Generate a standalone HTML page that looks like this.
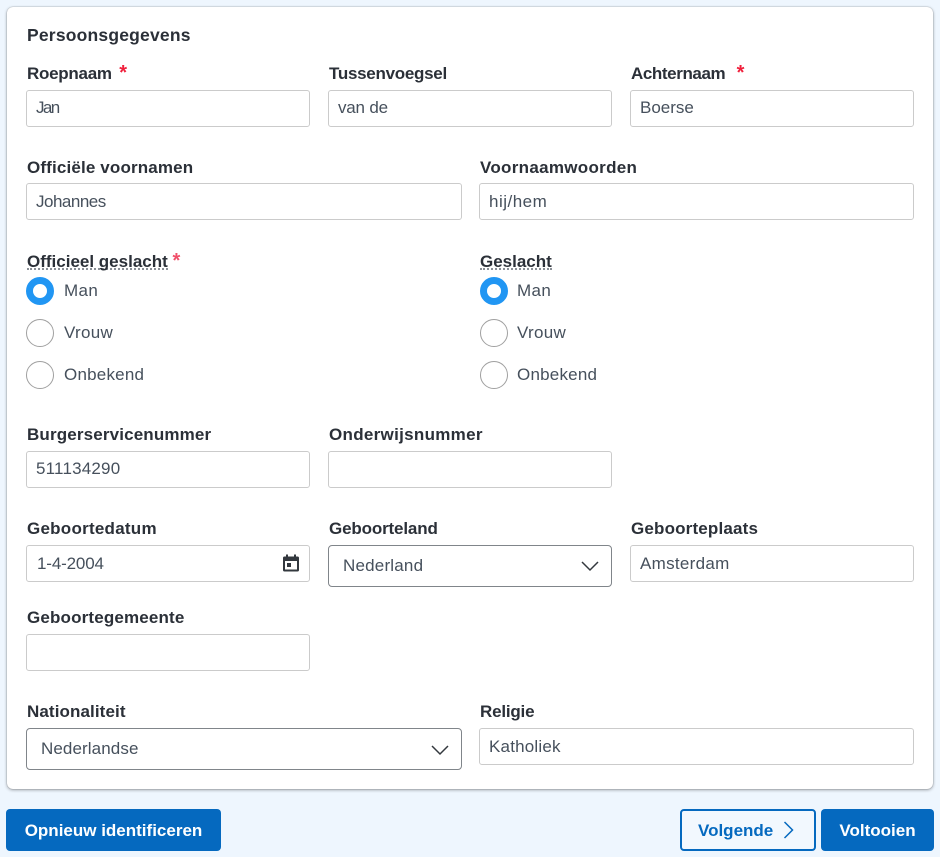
<!DOCTYPE html>
<html lang="nl">
<head>
<meta charset="utf-8">
<title>Persoonsgegevens</title>
<style>
html,body{margin:0;padding:0;}
body{width:940px;height:857px;background:#eef6fe;position:relative;overflow:hidden;font-family:"Liberation Sans",sans-serif;color:#3f4a56;}
.card{position:absolute;left:7px;top:7px;width:926px;height:782px;background:#fff;border-radius:6px;box-shadow:0 1px 3px rgba(0,0,0,.35),0 0 1px rgba(0,0,0,.4);}
.t{position:absolute;white-space:nowrap;line-height:20px;}
.h{font-size:17.5px;font-weight:700;color:#2b3038;left:27px;top:25px;letter-spacing:.2px;}
.l{font-size:17px;font-weight:700;color:#2b3038;letter-spacing:.1px;margin-top:1px;}
.l i{font-style:normal;color:#f0203c;font-size:20px;line-height:0;}
.d{border-bottom:2px dotted #8a8f96;line-height:12px;display:inline-block;}
.v{font-size:17px;color:#46505c;letter-spacing:.1px;}
.f{position:absolute;box-sizing:border-box;height:37px;background:#fff;border:1px solid #cbcbcb;border-radius:3px;}
.s{position:absolute;box-sizing:border-box;height:42px;background:#fff;border:1px solid #80858a;border-radius:4px;}
.r{position:absolute;box-sizing:border-box;width:28px;height:28px;border-radius:50%;border:1.7px solid #a0a0a0;background:#fff;}
.r.on{border:7.5px solid #2196f3;}
.b{position:absolute;box-sizing:border-box;top:809px;height:42px;border-radius:4px;background:#0569bf;color:#fff;font-size:17px;font-weight:700;text-align:center;line-height:42px;}
svg{position:absolute;}
</style>
</head>
<body>
<div class="card"></div>
<div class="t h">Persoonsgegevens</div>

<div class="t l" style="left:27px;top:63px;letter-spacing:-.27px">Roepnaam <i style="margin-left:3px">*</i></div>
<div class="f" style="left:26px;top:90px;width:284px"></div>
<div class="t v" style="left:36px;top:98px;letter-spacing:-1.6px">Jan</div>
<div class="t l" style="left:329px;top:63px;letter-spacing:-.28px">Tussenvoegsel</div>
<div class="f" style="left:328px;top:90px;width:284px"></div>
<div class="t v" style="left:338px;top:98px;letter-spacing:-.2px">van de</div>
<div class="t l" style="left:631px;top:63px;letter-spacing:-.4px">Achternaam <i style="margin-left:7px">*</i></div>
<div class="f" style="left:630px;top:90px;width:284px"></div>
<div class="t v" style="left:640px;top:98px;letter-spacing:0">Boerse</div>

<div class="t l" style="left:27px;top:157px;letter-spacing:.15px">Officiële voornamen</div>
<div class="f" style="left:26px;top:183px;width:436px"></div>
<div class="t v" style="left:36px;top:192px;letter-spacing:-.5px">Johannes</div>
<div class="t l" style="left:480px;top:157px;letter-spacing:.3px">Voornaamwoorden</div>
<div class="f" style="left:479px;top:183px;width:435px"></div>
<div class="t v" style="left:489px;top:192px;letter-spacing:.5px">hij/hem</div>

<div class="t l" style="left:27px;top:251px;letter-spacing:0"><span class="d">Officieel geslacht</span> <i style="color:#f0506a">*</i></div>
<div class="r on" style="left:26px;top:277px"></div>
<div class="t v" style="left:64px;top:281px;letter-spacing:.4px">Man</div>
<div class="r" style="left:26px;top:319px"></div>
<div class="t v" style="left:64px;top:323px;letter-spacing:.3px">Vrouw</div>
<div class="r" style="left:26px;top:361px"></div>
<div class="t v" style="left:64px;top:365px;letter-spacing:.22px">Onbekend</div>

<div class="t l" style="left:480px;top:251px;letter-spacing:0"><span class="d">Geslacht</span></div>
<div class="r on" style="left:480px;top:277px"></div>
<div class="t v" style="left:517px;top:281px;letter-spacing:.4px">Man</div>
<div class="r" style="left:480px;top:319px"></div>
<div class="t v" style="left:517px;top:323px;letter-spacing:.3px">Vrouw</div>
<div class="r" style="left:480px;top:361px"></div>
<div class="t v" style="left:517px;top:365px;letter-spacing:.22px">Onbekend</div>

<div class="t l" style="left:27px;top:424px;letter-spacing:.15px">Burgerservicenummer</div>
<div class="f" style="left:26px;top:451px;width:284px"></div>
<div class="t v" style="left:36px;top:459px;letter-spacing:.2px">511134290</div>
<div class="t l" style="left:329px;top:424px;letter-spacing:.3px">Onderwijsnummer</div>
<div class="f" style="left:328px;top:451px;width:284px"></div>

<div class="t l" style="left:27px;top:518px;letter-spacing:.25px">Geboortedatum</div>
<div class="f" style="left:26px;top:545px;width:284px"></div>
<div class="t v" style="left:37px;top:554px;letter-spacing:-.15px">1-4-2004</div>
<svg style="left:281px;top:553px" width="20" height="20" viewBox="0 0 20 20"><path fill="#33383e" d="M5 1.500h2v2h6v-2h2v2h1.500A1.500 1.500 0 0 1 18 5v12a1.500 1.500 0 0 1-1.500 1.500h-13A1.500 1.500 0 0 1 2 17V5a1.500 1.500 0 0 1 1.500-1.500H5zM4 8v8.500h12V8zm2 2h4v4H6z"/></svg>
<div class="t l" style="left:329px;top:518px;letter-spacing:-.15px">Geboorteland</div>
<div class="s" style="left:328px;top:545px;width:284px"></div>
<div class="t v" style="left:343px;top:556px;letter-spacing:.2px">Nederland</div>
<svg style="left:580px;top:559px" width="20" height="14" viewBox="0 0 20 14"><path d="M2 3l8 8 8-8" fill="none" stroke="#33383e" stroke-width="1.500"/></svg>
<div class="t l" style="left:631px;top:518px;letter-spacing:.17px">Geboorteplaats</div>
<div class="f" style="left:630px;top:545px;width:284px"></div>
<div class="t v" style="left:640px;top:554px;letter-spacing:.3px">Amsterdam</div>

<div class="t l" style="left:27px;top:607px;letter-spacing:.16px">Geboortegemeente</div>
<div class="f" style="left:26px;top:634px;width:284px"></div>

<div class="t l" style="left:27px;top:701px">Nationaliteit</div>
<div class="s" style="left:26px;top:728px;width:436px"></div>
<div class="t v" style="left:41px;top:739px">Nederlandse</div>
<svg style="left:430px;top:743px" width="20" height="14" viewBox="0 0 20 14"><path d="M2 3l8 8 8-8" fill="none" stroke="#33383e" stroke-width="1.500"/></svg>
<div class="t l" style="left:480px;top:701px;letter-spacing:-.2px">Religie</div>
<div class="f" style="left:479px;top:728px;width:435px"></div>
<div class="t v" style="left:489px;top:737px;letter-spacing:.2px">Katholiek</div>

<div class="b" style="left:6px;width:215px;line-height:43px">Opnieuw identificeren</div>
<div class="b" style="left:680px;width:136px;background:#f2f8fe;border:2px solid #0569bf;color:#0569bf;line-height:39px;text-align:left;padding-left:16px">Volgende</div>
<svg style="left:780px;top:821px" width="16" height="18" viewBox="0 0 16 18"><path d="M4.500 1l8 8-8 8" fill="none" stroke="#0569bf" stroke-width="1.500"/></svg>
<div class="b" style="left:821px;width:113px;line-height:43px">Voltooien</div>
</body>
</html>
